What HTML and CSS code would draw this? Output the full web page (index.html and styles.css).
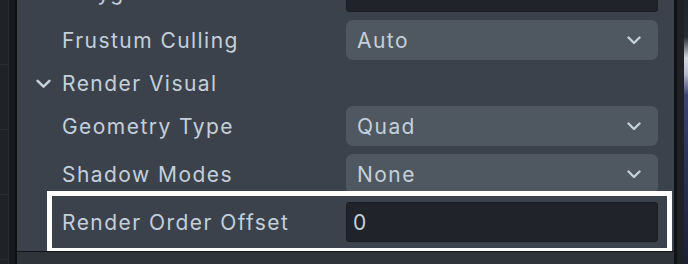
FILE: index.html
```
<!DOCTYPE html>
<html lang="en">
<head>
  <meta charset="UTF-8">
  <title>Render Visual</title>
  <link rel="stylesheet" href="styles.css">
</head>
<body>
  <div class="frame">
    <div class="side-left">
      <div class="cell"></div>
      <div class="cell"></div>
      <div class="cell"></div>
      <div class="cell"></div>
    </div>

    <div class="panel">
      <div class="props">
        <div class="rows">
          <div class="row">
            <span class="label">Polygon Offset Units</span>
            <div class="field">0.00</div>
          </div>

          <div class="row">
            <span class="label">Frustum Culling</span>
            <div class="select">Auto
              <svg class="caret" viewBox="0 0 14 9" width="14" height="9"><path d="M1.5 1.5 L7 7 L12.5 1.5"/></svg>
            </div>
          </div>

          <div class="group">
            <svg class="toggle" viewBox="0 0 14 9" width="14" height="9"><path d="M1.5 1.5 L7 7 L12.5 1.5"/></svg>
            <span class="label">Render Visual</span>
          </div>

          <div class="row">
            <span class="label">Geometry Type</span>
            <div class="select">Quad
              <svg class="caret" viewBox="0 0 14 9" width="14" height="9"><path d="M1.5 1.5 L7 7 L12.5 1.5"/></svg>
            </div>
          </div>

          <div class="row">
            <span class="label">Shadow Modes</span>
            <div class="select">None
              <svg class="caret" viewBox="0 0 14 9" width="14" height="9"><path d="M1.5 1.5 L7 7 L12.5 1.5"/></svg>
            </div>
          </div>

          <div class="row highlighted">
            <span class="label">Render Order Offset</span>
            <div class="field">0</div>
          </div>
        </div>
      </div>
      <div class="footer"></div>
    </div>

    <div class="side-right">
      <div class="gutter"></div>
      <div class="photo"></div>
    </div>
  </div>
</body>
</html>
```
FILE: styles.css
```
body {
  margin: 0;
  font-family: Inter, "Noto Sans", sans-serif;
  background: #1f2227;
  overflow: hidden;
}

.frame {
  display: flex;
  width: 688px;
  height: 264px;
  overflow: hidden;
}

.side-left {
  width: 8px;
  height: 264px;
  overflow: hidden;
  border-right: 1px solid #2a2d33;
  box-shadow: 6px 0 0 #17191c, 8px 0 0 #0e0f11;
  margin-right: 8px;
  background: #1f2227;
}

.side-left .cell {
  height: 64px;
  border-bottom: 1px solid #2a2d32;
}

.panel {
  width: 657px;
  display: flex;
  flex-direction: column;
}

.props {
  height: 251px;
  background: #3c424b;
  border-bottom: 1px solid #131417;
  overflow: hidden;
}

.rows {
  margin-top: -28px;
  display: flex;
  flex-direction: column;
  gap: 8px;
  padding-right: 16px;
}

.row {
  position: relative;
  display: grid;
  grid-template-columns: 284px 1fr;
  align-items: center;
  padding-left: 45px;
  height: 40px;
}

.group {
  display: flex;
  align-items: center;
  height: 30px;
  padding-left: 19px;
}

.label {
  color: #c3d0dc;
  font-size: 21px;
  letter-spacing: 1.45px;
  white-space: nowrap;
}

.toggle {
  width: 15px;
  height: 10px;
  margin-right: 11px;
  margin-top: 1px;
}

.toggle path, .caret path {
  fill: none;
  stroke: #c3d0dc;
  stroke-width: 2.4;
  stroke-linecap: round;
  stroke-linejoin: round;
}

.select {
  display: flex;
  align-items: center;
  justify-content: space-between;
  height: 40px;
  box-sizing: border-box;
  padding: 0 17px 0 11px;
  background: #4f5861;
  border-radius: 7px;
  color: #c3d0dc;
  font-size: 21px;
  letter-spacing: 1.45px;
}

.field {
  display: flex;
  align-items: center;
  height: 40px;
  box-sizing: border-box;
  padding: 0 6px;
  background: #20242a;
  border: 1px solid #1a1d21;
  border-radius: 3px;
  color: #c3d0dc;
  font-size: 21px;
  letter-spacing: 1.45px;
}

.highlighted::after {
  content: "";
  position: absolute;
  left: 30px;
  right: -14px;
  top: -11px;
  bottom: -11px;
  border: 5px solid #ffffff;
}

.footer {
  flex: 1;
  background: #2f333a;
}

.side-right {
  display: flex;
  flex: 1;
  border-left: 3px solid #111214;
}

.gutter {
  width: 7px;
  background: #1e2126;
}

.photo {
  flex: 1;
  background: linear-gradient(to bottom, #20242b 0, #262a32 14%, #d7d9de 22%, #b9bccc 28%, #3c4470 36%, #2c3358 60%, #1b2034 100%);
}
```
